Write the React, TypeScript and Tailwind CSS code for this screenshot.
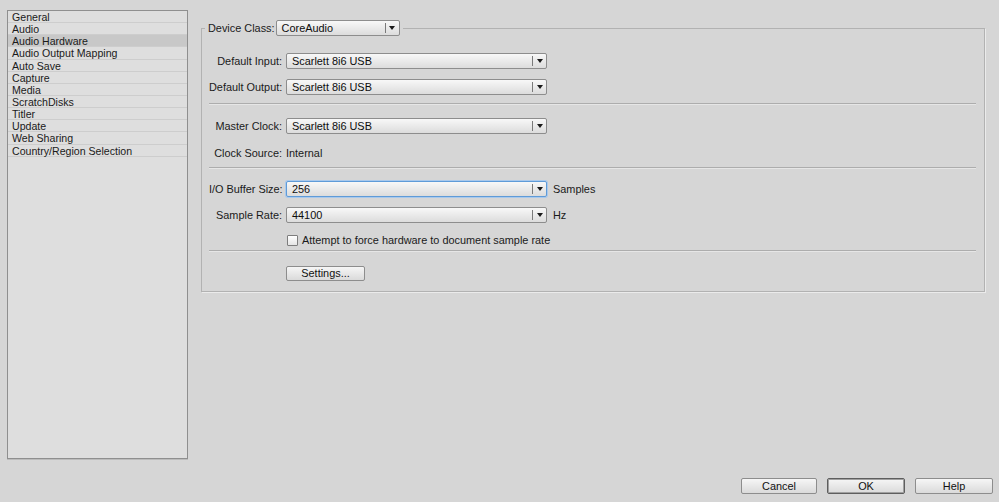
import type { ReactNode } from "react";

const sections = [
  "General",
  "Audio",
  "Audio Hardware",
  "Audio Output Mapping",
  "Auto Save",
  "Capture",
  "Media",
  "ScratchDisks",
  "Titler",
  "Update",
  "Web Sharing",
  "Country/Region Selection",
];

function Select({ value, className = "", focused = false }: { value: string; className?: string; focused?: boolean }) {
  return (
    <div
      className={`flex h-[16px] items-center rounded-[2px] border bg-linear-to-b from-[#f8f8f8] to-[#dcdcdc] ${
        focused ? "border-[#5f9bd8] shadow-[0_0_0_1px_#a9c9ec]" : "border-[#8d8d8d]"
      } ${className}`}
    >
      <span className="flex-1 truncate pl-[5px] leading-none text-[#0d0d0d]">{value}</span>
      <span className="h-[10px] w-px bg-[#7a7a7a]" />
      <span className="flex w-[13px] justify-center">
        <svg width="6" height="4" viewBox="0 0 6 4">
          <path d="M0 0h6L3 4z" fill="#1a1a1a" />
        </svg>
      </span>
    </div>
  );
}

function Button({ children, className = "" }: { children: ReactNode; className?: string }) {
  return (
    <button
      className={`flex h-[15px] items-center justify-center rounded-[2px] border bg-linear-to-b from-[#f6f6f6] to-[#dadada] leading-none text-[#111] ${className}`}
    >
      {children}
    </button>
  );
}

function Row({ label, children }: { label: string; children: ReactNode }) {
  return (
    <div className="flex items-center">
      <span className="w-[73px] whitespace-nowrap text-right leading-none">{label}</span>
      <div className="ml-[4px] flex items-center">{children}</div>
    </div>
  );
}

function Divider({ className = "" }: { className?: string }) {
  return <div className={`border-t border-b border-t-[#adadad] border-b-[#e6e6e6] ${className}`} />;
}

export default function App() {
  return (
    <div className="flex h-[502px] w-[999px] flex-col bg-[#d6d6d6] font-['Liberation_Sans',Arial,sans-serif] text-[10.9px] text-[#1a1a1a]">
      <div className="flex h-[478px] items-start">
        {/* category list */}
        <div className="ml-[7px] mt-[10px] h-[449px] w-[181px] border border-[#8f8f8f] bg-[#dedede] text-[10.6px] shadow-[0_1px_0_#bcbcbc]">
          {sections.map((s) => (
            <div
              key={s}
              className={`h-[12.15px] border-b border-[#cdcdcd] pl-[4px] leading-[12px] ${
                s === "Audio Hardware" ? "bg-[#c8c8c8]" : ""
              }`}
            >
              {s}
            </div>
          ))}
        </div>

        {/* device settings */}
        <fieldset className="ml-[13px] mt-[20px] w-[784px] border border-[#b2b2b2] p-0 pb-[10px] shadow-[1px_1px_0_#ebebeb]">
          <legend className="ml-[3px] flex items-center px-[3px]">
            <span className="leading-none">Device Class:</span>
            <Select value="CoreAudio" className="ml-[1px] w-[124px]" />
          </legend>
          <div className="flex flex-col px-[7px] pr-[8px]">
            <div className="mt-[17px]">
              <Row label="Default Input:">
                <Select value="Scarlett 8i6 USB" className="w-[261px]" />
              </Row>
            </div>
            <div className="mt-[10px]">
              <Row label="Default Output:">
                <Select value="Scarlett 8i6 USB" className="w-[261px]" />
              </Row>
            </div>
            <Divider className="mt-[8px]" />
            <div className="mt-[13px]">
              <Row label="Master Clock:">
                <Select value="Scarlett 8i6 USB" className="w-[261px]" />
              </Row>
            </div>
            <div className="mt-[11px] flex h-[16px] items-center">
              <Row label="Clock Source:">
                <span className="leading-none">Internal</span>
              </Row>
            </div>
            <Divider className="mt-[6px]" />
            <div className="mt-[12px]">
              <Row label="I/O Buffer Size:">
                <Select value="256" className="w-[261px]" focused />
                <span className="ml-[6px] leading-none">Samples</span>
              </Row>
            </div>
            <div className="mt-[10px]">
              <Row label="Sample Rate:">
                <Select value="44100" className="w-[261px]" />
                <span className="ml-[6px] leading-none">Hz</span>
              </Row>
            </div>
            <label className="ml-[78px] mt-[11px] flex h-[12px] items-center">
              <span className="h-[11px] w-[11px] rounded-[1px] border border-[#7d7d7d] bg-linear-to-b from-white to-[#e4e4e4]" />
              <span className="ml-[4px] leading-none">Attempt to force hardware to document sample rate</span>
            </label>
            <Divider className="mt-[4px]" />
            <Button className="ml-[77px] mt-[14px] w-[79px] border-[#8d8d8d]">Settings...</Button>
          </div>
        </fieldset>
      </div>

      <div className="flex justify-end gap-[10px] pr-[6px]">
        <Button className="h-[16px] w-[76px] border-[#8d8d8d]">Cancel</Button>
        <Button className="h-[16px] w-[78px] border-[#5e5e5e] shadow-[inset_0_0_0_1px_#a0a0a0]">OK</Button>
        <Button className="h-[16px] w-[78px] border-[#8d8d8d]">Help</Button>
      </div>
    </div>
  );
}
